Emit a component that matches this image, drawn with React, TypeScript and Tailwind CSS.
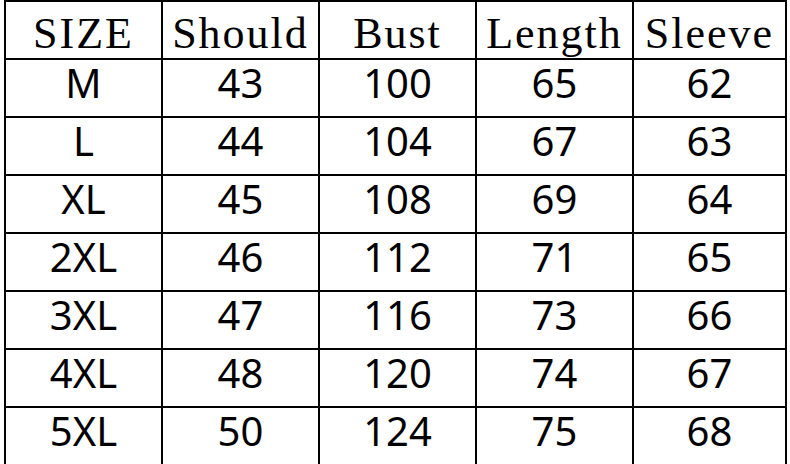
import React from "react";

const headers = ["SIZE", "Should", "Bust", "Length", "Sleeve"];

const rows = [
  ["M", "43", "100", "65", "62"],
  ["L", "44", "104", "67", "63"],
  ["XL", "45", "108", "69", "64"],
  ["2XL", "46", "112", "71", "65"],
  ["3XL", "47", "116", "73", "66"],
  ["4XL", "48", "120", "74", "67"],
  ["5XL", "50", "124", "75", "68"],
];

export default function App() {
  return (
    <div className="w-[790px] h-[464px] overflow-hidden bg-white">
      <div className="ml-[4px] grid grid-cols-[157px_157px_157px_157px_155px]">
        {headers.map((h, i) => (
          <div
            key={h}
            className={`h-[58px] flex items-center justify-center border-t-2 border-l-2 border-black pt-[8px] text-[44px] tracking-[2px] text-black font-['Liberation_Serif',serif] ${
              i === 4 ? "border-r-2" : ""
            }`}
          >
            {h}
          </div>
        ))}
        {rows.map((r) =>
          r.map((v, i) => (
            <div
              key={r[0] + i}
              className={`h-[58px] flex items-center justify-center border-t-2 border-l-2 border-black pb-[11px] text-[40px] text-black font-['Noto_Sans',sans-serif] ${
                i === 4 ? "border-r-2" : ""
              }`}
            >
              {v}
            </div>
          ))
        )}
      </div>
    </div>
  );
}
